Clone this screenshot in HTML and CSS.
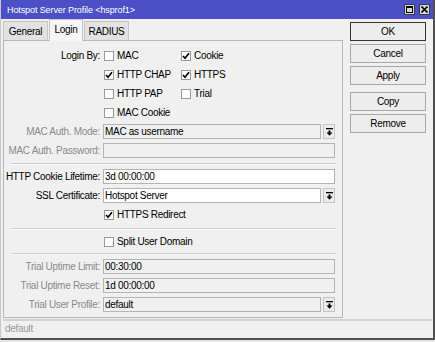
FILE: index.html
```html
<!DOCTYPE html>
<html lang="en">
<head>
    <meta charset="UTF-8">
    <title>Hotspot Server Profile</title>
    <link rel="stylesheet" href="styles.css">
</head>
<body>
    <div class="window">
        <!-- Title bar -->
        <div class="titlebar">
            <span class="title">Hotspot Server Profile &lt;hsprof1&gt;</span>
            <div class="title-btns">
                <span class="tbtn"><span class="max-glyph"></span></span>
                <span class="tbtn">
                    <svg width="7" height="7" viewBox="0 0 7 7"><path d="M0.5 0.5 L6.5 6.5 M6.5 0.5 L0.5 6.5" stroke="#000" stroke-width="1.6"/></svg>
                </span>
            </div>
        </div>

        <div class="content">
            <div class="main">
                <div class="tabs">
                    <div class="tab tab-general">General</div>
                    <div class="tab tab-login active">Login</div>
                    <div class="tab tab-radius">RADIUS</div>
                </div>
                <div class="panel">
                    <div class="row">
                        <label class="lbl">Login By:</label>
                        <div class="checks">
                            <span class="check"><span class="box"></span>MAC</span>
                            <span class="check"><span class="box on"></span>Cookie</span>
                        </div>
                    </div>
                    <div class="row">
                        <span></span>
                        <div class="checks">
                            <span class="check"><span class="box on"></span>HTTP CHAP</span>
                            <span class="check"><span class="box on"></span>HTTPS</span>
                        </div>
                    </div>
                    <div class="row">
                        <span></span>
                        <div class="checks">
                            <span class="check"><span class="box"></span>HTTP PAP</span>
                            <span class="check"><span class="box"></span>Trial</span>
                        </div>
                    </div>
                    <div class="row">
                        <span></span>
                        <div class="checks">
                            <span class="check"><span class="box"></span>MAC Cookie</span>
                        </div>
                    </div>
                    <div class="row">
                        <label class="lbl off">MAC Auth. Mode:</label>
                        <div class="combo">
                            <div class="field">MAC as username</div>
                            <span class="drop"></span>
                        </div>
                    </div>
                    <div class="row">
                        <label class="lbl off">MAC Auth. Password:</label>
                        <div class="field"></div>
                    </div>

                    <div class="sep"></div>

                    <div class="row">
                        <label class="lbl">HTTP Cookie Lifetime:</label>
                        <div class="field white">3d 00:00:00</div>
                    </div>
                    <div class="row">
                        <label class="lbl">SSL Certificate:</label>
                        <div class="combo">
                            <div class="field white">Hotspot Server</div>
                            <span class="drop"></span>
                        </div>
                    </div>
                    <div class="row">
                        <span></span>
                        <div class="checks">
                            <span class="check"><span class="box on"></span>HTTPS Redirect</span>
                        </div>
                    </div>

                    <div class="sep sep-low"></div>

                    <div class="row">
                        <span></span>
                        <div class="checks">
                            <span class="check"><span class="box"></span>Split User Domain</span>
                        </div>
                    </div>

                    <div class="sep sep-tight"></div>

                    <div class="row">
                        <label class="lbl off">Trial Uptime Limit:</label>
                        <div class="field">00:30:00</div>
                    </div>
                    <div class="row">
                        <label class="lbl off">Trial Uptime Reset:</label>
                        <div class="field">1d 00:00:00</div>
                    </div>
                    <div class="row">
                        <label class="lbl off">Trial User Profile:</label>
                        <div class="combo">
                            <div class="field">default</div>
                            <span class="drop"></span>
                        </div>
                    </div>
                </div>
            </div>

            <!-- Buttons -->
            <div class="side">
                <button class="btn default">OK</button>
                <button class="btn">Cancel</button>
                <button class="btn">Apply</button>
                <button class="btn spaced">Copy</button>
                <button class="btn">Remove</button>
            </div>
        </div>

        <div class="status">default</div>
    </div>
</body>
</html>
```

FILE: styles.css
```css
body {
    margin: 0;
    background-color: #e6e6e6;
    font-family: "Liberation Sans", Arial, sans-serif;
    font-size: 10px;
    letter-spacing: -0.3px;
    color: #000;
}
.window {
    width: 435px;
    height: 340px;
    box-sizing: border-box;
    background-color: #f0f0f0;
    border-left: 1px solid #c8c8c8;
    border-right: 2px solid #505050;
    border-bottom: 2px solid #505050;
}
.titlebar {
    height: 19px;
    background-color: #4c50c6;
    display: flex;
    align-items: center;
    justify-content: space-between;
    padding: 0 3px 0 6px;
}
.title {
    color: #fff;
    font-size: 9px;
    letter-spacing: -0.1px;
}
.title-btns {
    display: flex;
    gap: 4px;
}
.tbtn {
    width: 11px;
    height: 11px;
    box-sizing: border-box;
    background-color: #d8d8d8;
    border: 1px solid #3a3a3a;
    display: flex;
    align-items: center;
    justify-content: center;
}
.max-glyph {
    width: 7px;
    height: 7px;
    box-sizing: border-box;
    border: 1px solid #000;
    border-top-width: 2px;
}
.content {
    display: flex;
    height: 299px;
    padding-left: 2px;
}
.main {
    width: 340px;
}
.tabs {
    display: flex;
    align-items: flex-end;
    height: 21px;
    gap: 1px;
}
.tab {
    height: 19px;
    box-sizing: border-box;
    border: 1px solid #c6c6c6;
    border-bottom: none;
    background-color: #e2e2e2;
    text-align: center;
    line-height: 20px;
    position: relative;
}
.tab-general { width: 45px; }
.tab-login { width: 34px; }
.tab-radius { width: 45px; }
.tab.active {
    height: 22px;
    margin-bottom: -1px;
    background-color: #f6f6f6;
    line-height: 20px;
    z-index: 1;
}
.panel {
    height: 278px;
    box-sizing: border-box;
    border: 1px solid #b8b8b8;
    padding-top: 7px;
    display: flex;
    flex-direction: column;
    gap: 4px;
}
.row {
    display: grid;
    grid-template-columns: 96px 232px;
    column-gap: 3px;
    height: 15px;
    line-height: 15px;
}
.lbl {
    text-align: right;
    white-space: nowrap;
}
.lbl.off {
    color: #8a8a8a;
}
.checks {
    display: flex;
}
.check {
    width: 77px;
    display: flex;
    align-items: center;
    white-space: nowrap;
}
.box {
    width: 10px;
    height: 10px;
    box-sizing: border-box;
    margin: 0 3px 0 1px;
    border: 1px solid #9a9a9a;
    background-color: #fff;
    flex: none;
}
.box.on {
    background: #fff url("data:image/svg+xml,%3Csvg xmlns='http://www.w3.org/2000/svg' width='8' height='8' viewBox='0 0 8 8'%3E%3Cpath d='M1 4 L3 6.2 L7 1.3' fill='none' stroke='%23000' stroke-width='1.7'/%3E%3C/svg%3E") no-repeat center;
}
.field {
    height: 15px;
    box-sizing: border-box;
    border: 1px solid #b4b4b4;
    background-color: #f0f0f0;
    padding-left: 1px;
    line-height: 13px;
    white-space: nowrap;
    overflow: hidden;
}
.field.white {
    background-color: #fff;
}
.combo {
    display: flex;
    gap: 2px;
}
.combo .field {
    flex: 1;
}
.drop {
    width: 12px;
    height: 15px;
    box-sizing: border-box;
    border: 1px solid #c4c4c4;
    background: #ececec url("data:image/svg+xml,%3Csvg xmlns='http://www.w3.org/2000/svg' width='7' height='8' viewBox='0 0 7 8'%3E%3Crect x='0' y='0' width='7' height='1.3' fill='%23000'/%3E%3Crect x='2.5' y='2.5' width='2' height='2.5' fill='%23000'/%3E%3Cpath d='M0.5 4.5 L6.5 4.5 L3.5 7.8 Z' fill='%23000'/%3E%3C/svg%3E") no-repeat center;
    flex: none;
}
.sep {
    margin: 1px 6px 0 7px;
    height: 2px;
    box-sizing: border-box;
    border-top: 1px solid #cdcdcd;
    border-bottom: 1px solid #fafafa;
}
.sep-low {
    margin-top: 2px;
}
.sep-tight {
    margin-top: 0;
}
.side {
    width: 76px;
    margin-left: 7px;
    padding-top: 3px;
    display: flex;
    flex-direction: column;
    gap: 3px;
}
.btn {
    height: 19px;
    padding: 0;
    font-family: inherit;
    font-size: 10px;
    letter-spacing: -0.3px;
    color: #000;
    background-color: #ededed;
    border: 1px solid #a8a8a8;
    border-radius: 0;
}
.btn.default {
    border-color: #333;
}
.btn.spaced {
    margin-top: 4px;
}
.status {
    margin: 1px 1px 0 2px;
    height: 19px;
    box-sizing: border-box;
    border-top: 2px solid #d2d2d2;
    padding-left: 2px;
    line-height: 16px;
    color: #9a9a9a;
}
```
